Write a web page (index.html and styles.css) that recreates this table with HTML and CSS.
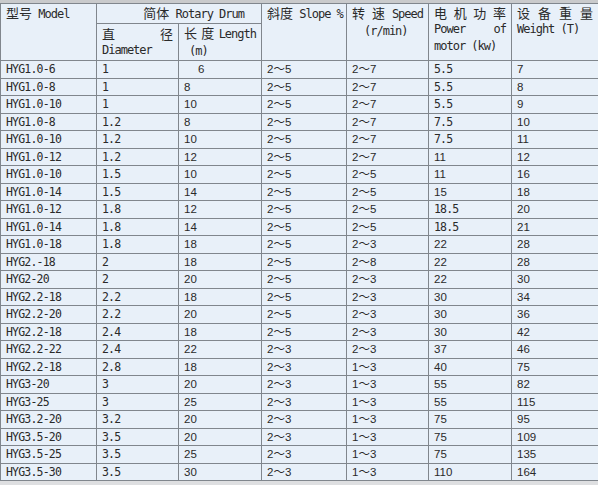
FILE: index.html
```html
<!DOCTYPE html>
<html lang="zh">
<head>
<meta charset="utf-8">
<link rel="stylesheet" href="styles.css">
</head>
<body>
<div class="wrap">
<table class="spec">
<colgroup>
<col class="c1"><col class="c2"><col class="c3"><col class="c4"><col class="c5"><col class="c6"><col class="c7">
</colgroup>
<thead>
<tr class="h1">
<th rowspan="2">型号<span class="lat"> Model</span></th>
<th colspan="2" class="drum">简体<span class="lat"> Rotary Drum</span></th>
<th rowspan="2">斜度<span class="lat"> Slope %</span></th>
<th rowspan="2"><div class="j">转 速 <span class="lat">Speed</span></div><div class="lat ind-l">(r/min)</div></th>
<th rowspan="2"><div class="j">电 机 功 率</div><div class="lat j">Power of</div><div class="lat">motor (kw)</div></th>
<th rowspan="2"><div class="j">设 备 重 量</div><div class="lat">Weight (T)</div></th>
</tr>
<tr class="h2">
<th><div class="j">直 径</div><div class="lat">Diameter</div></th>
<th><div class="j">长 度 <span class="lat">Length</span></div><div class="lat ind-s">(m)</div></th>
</tr>
</thead>
<tbody>
<tr><td class="m">HYG1.0-6</td><td class="m">1</td><td class="pad">6</td><td>2～5</td><td>2～7</td><td class="m">5.5</td><td>7</td></tr>
<tr><td class="m">HYG1.0-8</td><td class="m">1</td><td>8</td><td>2～5</td><td>2～7</td><td class="m">5.5</td><td>8</td></tr>
<tr><td class="m">HYG1.0-10</td><td class="m">1</td><td>10</td><td>2～5</td><td>2～7</td><td class="m">5.5</td><td>9</td></tr>
<tr><td class="m">HYG1.0-8</td><td class="m">1.2</td><td>8</td><td>2～5</td><td>2～7</td><td class="m">7.5</td><td>10</td></tr>
<tr><td class="m">HYG1.0-10</td><td class="m">1.2</td><td>10</td><td>2～5</td><td>2～7</td><td class="m">7.5</td><td>11</td></tr>
<tr><td class="m">HYG1.0-12</td><td class="m">1.2</td><td>12</td><td>2～5</td><td>2～7</td><td>11</td><td>12</td></tr>
<tr><td class="m">HYG1.0-10</td><td class="m">1.5</td><td>10</td><td>2～5</td><td>2～5</td><td>11</td><td>16</td></tr>
<tr><td class="m">HYG1.0-14</td><td class="m">1.5</td><td>14</td><td>2～5</td><td>2～5</td><td>15</td><td>18</td></tr>
<tr><td class="m">HYG1.0-12</td><td class="m">1.8</td><td>12</td><td>2～5</td><td>2～5</td><td class="m">18.5</td><td>20</td></tr>
<tr><td class="m">HYG1.0-14</td><td class="m">1.8</td><td>14</td><td>2～5</td><td>2～5</td><td class="m">18.5</td><td>21</td></tr>
<tr><td class="m">HYG1.0-18</td><td class="m">1.8</td><td>18</td><td>2～5</td><td>2～3</td><td>22</td><td>28</td></tr>
<tr><td class="m">HYG2.-18</td><td class="m">2</td><td>18</td><td>2～5</td><td>2～8</td><td>22</td><td>28</td></tr>
<tr><td class="m">HYG2-20</td><td class="m">2</td><td>20</td><td>2～5</td><td>2～3</td><td>22</td><td>30</td></tr>
<tr><td class="m">HYG2.2-18</td><td class="m">2.2</td><td>18</td><td>2～5</td><td>2～3</td><td>30</td><td>34</td></tr>
<tr><td class="m">HYG2.2-20</td><td class="m">2.2</td><td>20</td><td>2～5</td><td>2～3</td><td>30</td><td>36</td></tr>
<tr><td class="m">HYG2.2-18</td><td class="m">2.4</td><td>18</td><td>2～5</td><td>2～3</td><td>30</td><td>42</td></tr>
<tr><td class="m">HYG2.2-22</td><td class="m">2.4</td><td>22</td><td>2～3</td><td>2～3</td><td>37</td><td>46</td></tr>
<tr><td class="m">HYG2.2-18</td><td class="m">2.8</td><td>18</td><td>2～3</td><td>1～3</td><td>40</td><td>75</td></tr>
<tr><td class="m">HYG3-20</td><td class="m">3</td><td>20</td><td>2～3</td><td>1～3</td><td>55</td><td>82</td></tr>
<tr><td class="m">HYG3-25</td><td class="m">3</td><td>25</td><td>2～3</td><td>1～3</td><td>55</td><td>115</td></tr>
<tr><td class="m">HYG3.2-20</td><td class="m">3.2</td><td>20</td><td>2～3</td><td>1～3</td><td>75</td><td>95</td></tr>
<tr><td class="m">HYG3.5-20</td><td class="m">3.5</td><td>20</td><td>2～3</td><td>1～3</td><td>75</td><td>109</td></tr>
<tr><td class="m">HYG3.5-25</td><td class="m">3.5</td><td>25</td><td>2～3</td><td>1～3</td><td>75</td><td>135</td></tr>
<tr><td class="m">HYG3.5-30</td><td class="m">3.5</td><td>30</td><td>2～3</td><td>1～3</td><td>110</td><td>164</td></tr>
</tbody>
</table>
</div>
</body>
</html>
```
FILE: styles.css
```css
html, body {
  margin: 0;
  padding: 0;
  background: #dedfe1;
}
body {
  width: 598px;
  height: 485px;
  overflow: hidden;
}
.wrap {
  padding-top: 3px;
  background: linear-gradient(#c9cacc 0, #c9cacc 3px, #e9eaec 3px);
}
.spec {
  border-collapse: collapse;
  table-layout: fixed;
  width: 598px;
  background: #e8f0f9;
  color: #2a2a2a;
}
.c1 { width: 96px; }
.c2 { width: 82px; }
.c3 { width: 83px; }
.c4 { width: 85px; }
.c5 { width: 82px; }
.c6 { width: 83px; }
.c7 { width: 87px; }
.spec th, .spec td {
  border: 1px solid #80868d;
  padding: 0 5px;
  text-align: left;
  white-space: nowrap;
  overflow: hidden;
}
.spec th {
  font-weight: normal;
  vertical-align: top;
  font-family: "Noto Sans CJK SC", sans-serif;
  font-size: 13px;
  line-height: 17px;
}
.h1 { height: 19px; }
.h2 { height: 34px; }
.h2 th { vertical-align: middle; }
.spec th.drum {
  text-align: right;
  padding-right: 17px;
}
.lat {
  font-family: "DejaVu Sans Mono", monospace;
  font-size: 12px;
  letter-spacing: -1px;
}
.j {
  text-align: justify;
  text-align-last: justify;
}
.ind-l { padding-left: 12px; }
.ind-s { padding-left: 5px; }
.spec tbody tr { height: 17.5px; }
.spec td {
  font-family: "Liberation Sans", "Noto Sans CJK SC", sans-serif;
  font-size: 11.5px;
  line-height: 14px;
  vertical-align: middle;
}
.spec td.m {
  font-family: "DejaVu Sans Mono", "Noto Sans CJK SC", monospace;
  font-size: 11.5px;
  letter-spacing: -0.8px;
}
.spec td.pad { padding-left: 19px; }
```
